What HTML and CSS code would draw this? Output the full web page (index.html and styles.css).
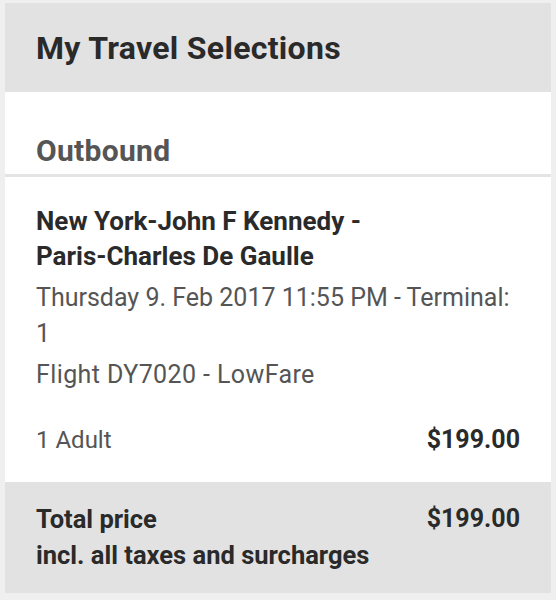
FILE: index.html
```html
<!DOCTYPE html>
<html>
<head>
<meta charset="utf-8">
<link rel="stylesheet" href="styles.css">
</head>
<body>
<div class="card">
  <div class="header"><h1 class="title">My Travel Selections</h1></div>
  <div class="leg-head"><h2 class="leg-title">Outbound</h2></div>
  <div class="leg-body">
    <div class="route">New York-John F Kennedy -<br>Paris-Charles De Gaulle</div>
    <div class="info date">Thursday 9. Feb 2017 11:55 PM - Terminal:<br>1</div>
    <div class="info flight">Flight DY7020 - LowFare</div>
    <div class="row pax">
      <span class="pax-label">1 Adult</span>
      <span class="price">$199.00</span>
    </div>
  </div>
  <div class="total">
    <div class="total-label">Total price<br>incl. all taxes and surcharges</div>
    <div class="price">$199.00</div>
  </div>
</div>
</body>
</html>
```
FILE: styles.css
```css
* { box-sizing: border-box; }
body {
  margin: 0;
  background: #efefef;
  padding: 3px 5px 6px 5px;
  font-family: Roboto, "Liberation Sans", sans-serif;
  color: #2b2b2b;
}
.card {
  background: #ffffff;
}
.header {
  background: #e2e2e2;
  height: 89px;
  display: flex;
  align-items: center;
  padding: 0 31px;
}
.title {
  margin: 0;
  font-size: 32px;
  line-height: 40px;
  font-weight: 700;
  letter-spacing: 0.3px;
  color: #2a2a2a;
}
.leg-head {
  height: 85px;
  display: flex;
  align-items: flex-end;
  padding: 0 31px 5px;
  border-bottom: 3px solid #e4e4e4;
}
.leg-title {
  margin: 0;
  font-size: 30px;
  line-height: 36px;
  font-weight: 700;
  letter-spacing: 0.3px;
  color: #555555;
}
.leg-body {
  padding: 27px 31px 24px;
}
.route {
  font-size: 26px;
  font-weight: 700;
  line-height: 35px;
  color: #2a2a2a;
}
.info {
  font-size: 25px;
  line-height: 36px;
  color: #555555;
}
.date {
  margin-top: 6px;
}
.flight {
  margin-top: 5px;
  letter-spacing: 0.4px;
}
.row {
  display: flex;
  justify-content: space-between;
  align-items: center;
  line-height: 36px;
}
.pax {
  margin-top: 29px;
}
.pax-label {
  font-size: 24px;
  color: #555555;
}
.price {
  font-size: 25px;
  font-weight: 700;
  color: #2a2a2a;
}
.total {
  background: #e2e2e2;
  height: 111px;
  display: flex;
  justify-content: space-between;
  align-items: flex-start;
  padding: 19px 31px 0;
}
.total-label {
  font-size: 25.5px;
  font-weight: 700;
  line-height: 36px;
  color: #2a2a2a;
}
.total .price {
  line-height: 36px;
}
```
